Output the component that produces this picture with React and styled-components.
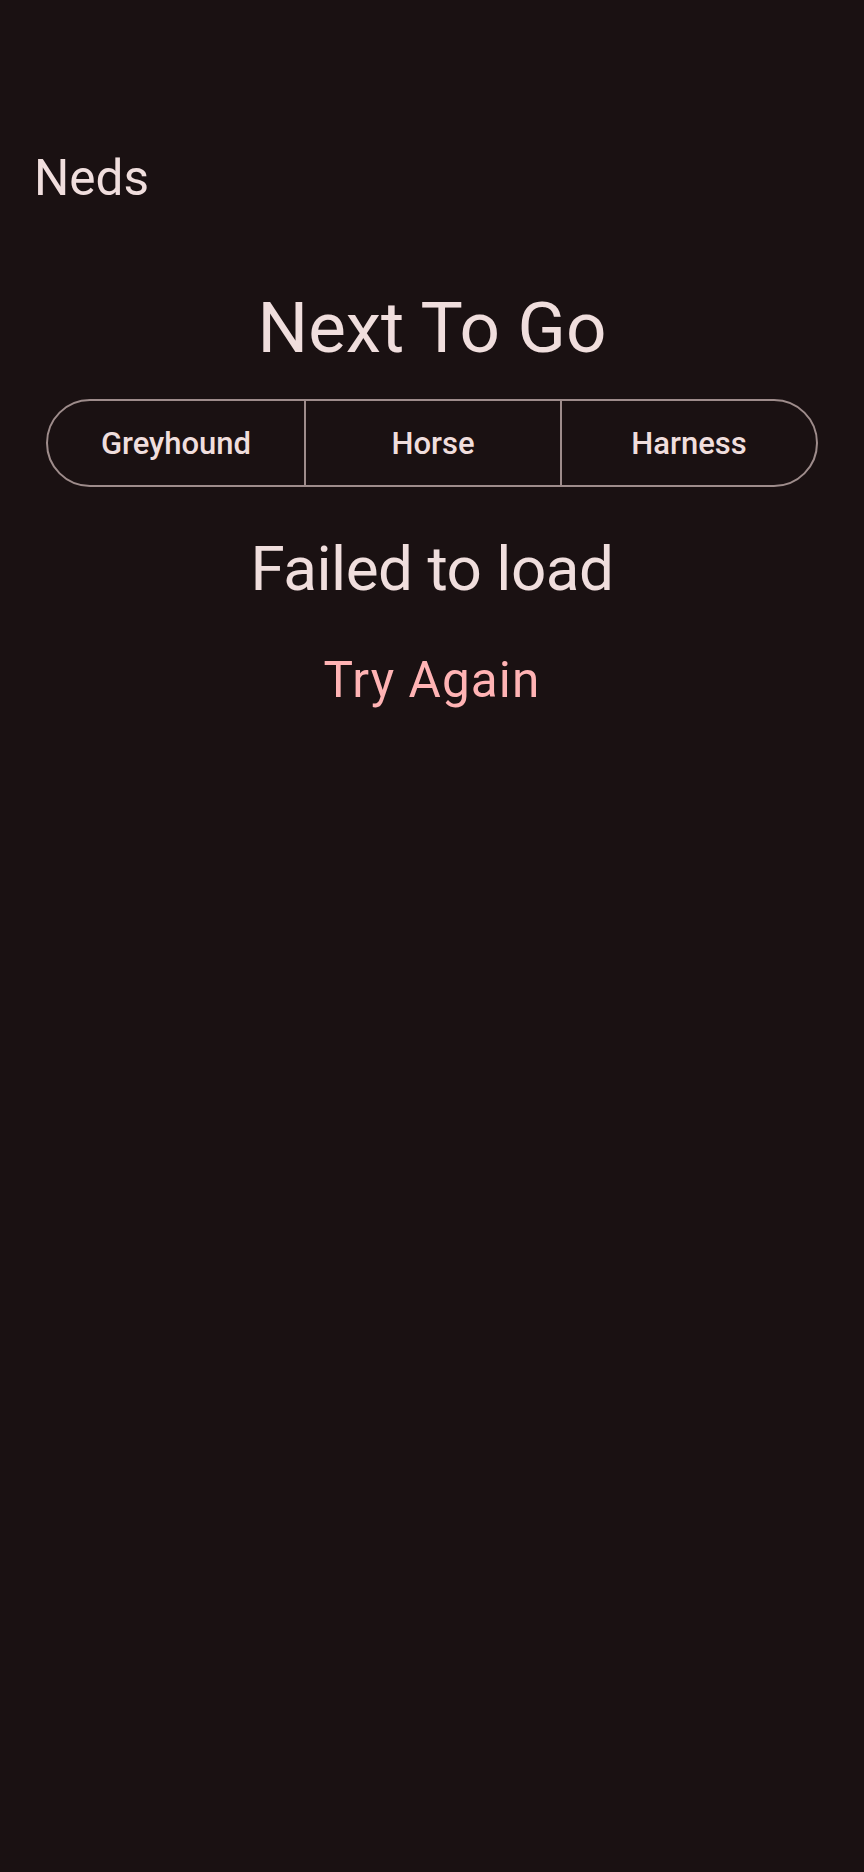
import React from 'react';
import styled, { createGlobalStyle } from 'styled-components';

const GlobalStyle = createGlobalStyle`
  html, body {
    margin: 0;
    padding: 0;
    background: #1a1112;
  }
  body {
    font-family: Roboto, "Noto Sans", "Liberation Sans", sans-serif;
    color: #f0dedd;
  }
`;

const Screen = styled.div`
  min-height: 1872px;
  background: #1a1112;
  display: flex;
  flex-direction: column;
`;

const AppBar = styled.header`
  padding: 146px 34px 0;
`;

const AppTitle = styled.h1`
  margin: 0;
  font-size: 49.5px;
  line-height: 64px;
  font-weight: 400;
`;

const Content = styled.main`
  display: flex;
  flex-direction: column;
  align-items: center;
  padding: 74px 46px 0;
`;

const Heading = styled.h2`
  margin: 0;
  font-size: 71px;
  line-height: 88px;
  font-weight: 400;
`;

const Segments = styled.div`
  margin-top: 27px;
  width: 100%;
  height: 88px;
  box-sizing: border-box;
  display: grid;
  grid-template-columns: repeat(3, 1fr);
  border: 2px solid #9e8c8b;
  border-radius: 44px;
  overflow: hidden;
`;

const Segment = styled.button`
  border: none;
  border-left: ${props => (props.first ? 'none' : '2px solid #9e8c8b')};
  background: transparent;
  color: #f0dedd;
  font-family: inherit;
  font-size: 31px;
  font-weight: 500;
  padding: 0;
`;

const Message = styled.p`
  margin: 42px 0 0;
  font-size: 62px;
  line-height: 80px;
  letter-spacing: -0.5px;
`;

const RetryButton = styled.button`
  margin-top: 39px;
  border: none;
  background: transparent;
  color: #ffb3b4;
  font-family: inherit;
  font-size: 49.5px;
  line-height: 64px;
  letter-spacing: 1.1px;
  padding: 0;
`;

const tabs = ['Greyhound', 'Horse', 'Harness'];

const App = () => (
  <Screen>
    <GlobalStyle />
    <AppBar>
      <AppTitle>Neds</AppTitle>
    </AppBar>
    <Content>
      <Heading>Next To Go</Heading>
      <Segments>
        {tabs.map((tab, i) => (
          <Segment key={tab} first={i === 0}>
            {tab}
          </Segment>
        ))}
      </Segments>
      <Message>Failed to load</Message>
      <RetryButton>Try Again</RetryButton>
    </Content>
  </Screen>
);

export default App;
